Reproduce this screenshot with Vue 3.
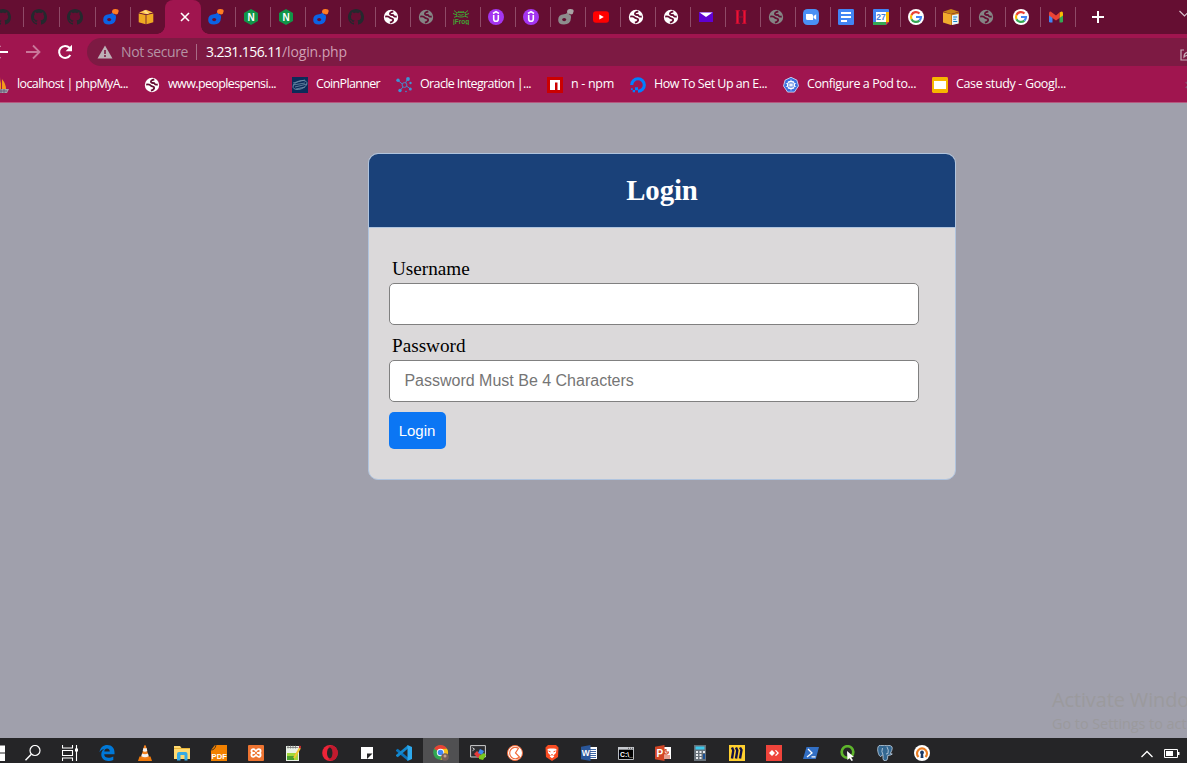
<script setup>
const leadingTabs = ['github', 'github', 'github', 'draw', 'aws']
const trailingTabs = [
  'draw', 'nginx', 'nginx', 'draw', 'github', 'globe', 'globe-dim', 'jfrog', 'udemy', 'udemy', 'draw-dim', 'youtube',
  'globe', 'globe', 'mail', 'heroku', 'globe-dim', 'zoom', 'docs', 'calendar', 'google', 'awsdoc', 'globe-dim', 'google', 'gmail',
]
const bookmarks = [
  { icon: 'pma', label: 'localhost | phpMyA...', width: 111 },
  { icon: 'globe', label: 'www.peoplespensi...', width: 108 },
  { icon: 'coin', label: 'CoinPlanner', width: 64 },
  { icon: 'nodes', label: 'Oracle Integration |...', width: 111 },
  { icon: 'npm', label: 'n - npm', width: 43 },
  { icon: 'ocean', label: 'How To Set Up an E...', width: 113 },
  { icon: 'kube', label: 'Configure a Pod to...', width: 109 },
  { icon: 'slides', label: 'Case study - Googl...', width: 110 },
]
const apps = [
  'windows', 'search', 'taskview', 'edge', 'vlc', 'folder', 'pdf', 'xampp', 'notepad', 'opera', 'sticky', 'vscode', 'chrome',
  'terminal', 'postman', 'brave', 'word', 'cmd', 'ppt', 'calc', 'miro', 'anydesk', 'pshell', 'qlik', 'pgsql', 'openvpn',
]
// Spreads the letters of a label so that it fills exactly the given width.
const vFit = {
  mounted(el, { value }) {
    const natural = el.getBoundingClientRect().width
    el.style.letterSpacing = (value - natural) / el.textContent.length + 'px'
  },
}
</script>

<template>
  <svg class="defs" width="0" height="0">
    <symbol id="github" viewBox="0 0 16 16"><path fill="#24292e" d="M8 0C3.58 0 0 3.58 0 8c0 3.54 2.29 6.53 5.47 7.59.4.07.55-.17.55-.38 0-.19-.01-.82-.01-1.49-2.01.37-2.53-.49-2.69-.94-.09-.23-.48-.94-.82-1.13-.28-.15-.68-.52-.01-.53.63-.01 1.08.58 1.23.82.72 1.21 1.87.87 2.33.66.07-.52.28-.87.51-1.07-1.78-.2-3.64-.89-3.64-3.95 0-.87.31-1.59.82-2.15-.08-.2-.36-1.02.08-2.12 0 0 .67-.21 2.2.82.64-.18 1.32-.27 2-.27s1.36.09 2 .27c1.53-1.04 2.2-.82 2.2-.82.44 1.1.16 1.92.08 2.12.51.56.82 1.27.82 2.15 0 3.07-1.87 3.75-3.65 3.95.29.25.54.73.54 1.48 0 1.07-.01 1.93-.01 2.2 0 .21.15.46.55.38A8.01 8.01 0 0016 8c0-4.42-3.58-8-8-8z" /></symbol>
    <symbol id="draw" viewBox="0 0 16 16">
      <path d="M9 3q0-2.800 3-2.900 4-.3 3.600 2.400-.3 2.800-2.600 3.100-.8 0-1.200-.8-2.800.6-2.800-1.800z" fill="#ff7c22" />
      <path d="M.2 11Q.2 5.600 6 5.300q2.500-.2 3.200-1.500 1.200 1.600 3 2.200 1 .4.8 2.500-.3 7-7 7Q.2 15.500.2 11z" fill="#0b62e4" />
      <ellipse cx="6.200" cy="10.600" rx="2" ry="1.600" fill="#650e32" />
    </symbol>
    <symbol id="draw-dim" viewBox="0 0 16 16">
      <path d="M9 3q0-2.800 3-2.900 4-.3 3.600 2.400-.3 2.800-2.600 3.100-.8 0-1.200-.8-2.800.6-2.800-1.800z" fill="#a9a3a5" />
      <path d="M.2 11Q.2 5.600 6 5.300q2.500-.2 3.200-1.500 1.200 1.600 3 2.200 1 .4.8 2.500-.3 7-7 7Q.2 15.500.2 11z" fill="#8d8d8d" />
      <ellipse cx="6.200" cy="10.600" rx="2" ry="1.600" fill="#650e32" />
    </symbol>
    <symbol id="aws" viewBox="0 0 16 16">
      <path d="M1 3.500 8 .7l7 2.800L8 5.300z" fill="#ffc24a" /><path d="M.7 4.500 7.600 6v9.300L.7 13.200zM8.400 6l6.900-1.500v8.700l-6.900 2.100z" fill="#efa922" />
      <path d="m5 2 2.500-.8 3.500 3.500-2 .4z" fill="#ffe08a" />
    </symbol>
    <symbol id="awsdoc" viewBox="0 0 16 16">
      <path d="M0 2.800 8 0l8 2.800-8 2.300z" fill="#c88418" /><path d="m0 3.200 8 2V16l-8-2.500z" fill="#f2ab2d" /><path d="m8 5.200 8-2v11L8 16z" fill="#c98017" />
      <path d="m9 6.200 6.500-1.200v9.600L9 15.900z" fill="#e8f6ff" /><path d="M10.200 8h4M10.200 10.200h3M10.200 12.500h4" stroke="#1583c5" stroke-width="1.100" />
    </symbol>
    <symbol id="nginx" viewBox="0 0 16 16"><path d="M8 0l7 4v8l-7 4-7-4V4z" fill="#119548" /><text x="8" y="11.600" font-size="10" font-weight="bold" text-anchor="middle" fill="#fff">N</text></symbol>
    <symbol id="globe" viewBox="0 0 16 16">
      <circle cx="8" cy="8" r="7.200" fill="#fff" />
      <path d="M2.200 7.600c2-.3 3.900-.1 4.500 1 .7 1.100 3.500.3 3.500 2.100 0 1.600-1.700 2.500-3.300 3M10.300 2.500c-2.300.3-3.800 1.400-3.300 2.700.5 1.400 3.200.2 3.700 1.500.3.900 2 1.100 3 .7" fill="none" stroke="#650e32" stroke-width="1.800" />
    </symbol>
    <symbol id="globe-dim" viewBox="0 0 16 16">
      <circle cx="8" cy="8" r="7.200" fill="#858585" />
      <path d="M2.200 7.600c2-.3 3.900-.1 4.500 1 .7 1.100 3.500.3 3.500 2.100 0 1.600-1.700 2.500-3.300 3M10.300 2.500c-2.300.3-3.800 1.400-3.300 2.700.5 1.400 3.200.2 3.700 1.500.3.900 2 1.100 3 .7" fill="none" stroke="#650e32" stroke-width="1.800" />
    </symbol>
    <symbol id="jfrog" viewBox="0 0 16 16">
      <g fill="none" stroke="#41a533" stroke-width="1"><path d="M1 1.500 4 4M15 1.500 12 4M0 4.500l4 1.500M16 4.500 12 6M1 8.300l3-1M15 8.300l-3-1M5 2.500c1 1.200 5 1.200 6 0" /><ellipse cx="8" cy="5.500" rx="4.500" ry="2.500" /><path d="M5.500 5.500q2.500 1.500 5 0" /></g>
      <text x="8" y="14.500" font-size="6.500" font-weight="bold" text-anchor="middle" fill="#41a533">jFrog</text>
    </symbol>
    <symbol id="udemy" viewBox="0 0 16 16"><circle cx="8" cy="8" r="8" fill="#a435f0" /><path d="m5 4.500 3-1.900 3 1.900M5.700 6v4q0 2.300 2.300 2.300t2.300-2.300V6" fill="none" stroke="#fff" stroke-width="1.600" /></symbol>
    <symbol id="youtube" viewBox="0 0 16 16"><rect y="2.200" width="16" height="11.600" rx="3" fill="red" /><path d="m6.300 5.400 4.500 2.600-4.500 2.600z" fill="#fff" /></symbol>
    <symbol id="mail" viewBox="0 0 16 16"><path d="M1 3h14v10H1z" fill="#6001d2" /><path d="M1.500 3.500h13L8 8z" fill="#fff" /></symbol>
    <symbol id="heroku" viewBox="0 0 16 16"><path d="M4.500 1.500v13M11.500 1.500v13" stroke="#f01135" stroke-width="2.300" /><path d="M2.500 1.700h4.500M9 1.700h4.500M2.500 14.300h4.500M9 14.300h4.500" stroke="#d00d31" stroke-width=".9" /><path d="M5 8h6" stroke="#b00b2d" stroke-width=".8" /></symbol>
    <symbol id="zoom" viewBox="0 0 16 16"><rect width="16" height="16" rx="4.500" fill="#4a90f5" /><path d="M3 5h5.500q1.500 0 1.500 1.500V11H4.500Q3 11 3 9.500zM10.500 7l2.700-1.700v5.500L10.500 9z" fill="#fff" /></symbol>
    <symbol id="docs" viewBox="0 0 16 16"><rect width="16" height="16" rx="1.300" fill="#4285f4" /><path d="M3 4h10M3 8h10M3 12h6" stroke="#fff" stroke-width="2" /></symbol>
    <symbol id="calendar" viewBox="0 0 16 16">
      <rect width="16" height="16" rx="1" fill="#4285f4" /><path d="M13 3h3v10h-3z" fill="#fbbc04" /><path d="M0 13h13v3H1q-1 0-1-1z" fill="#34a853" /><path d="M13 13h3l-3 3z" fill="#ea4335" /><path d="M16 13v3h-3z" fill="#650e32" /><path d="M3 3h10v10H3z" fill="#fff" />
      <text x="7.900" y="11.200" font-size="8.500" font-weight="bold" text-anchor="middle" fill="#3f7fdf">27</text>
    </symbol>
    <symbol id="google" viewBox="0 0 16 16">
      <circle cx="8" cy="8" r="8" fill="#fff" /><g fill="none" stroke-width="2.200"><path d="M11.500 4.500A5 5 0 0 0 3.500 5.900" stroke="#ea4335" /><path d="M3.500 5.900a5 5 0 0 0 0 4.300" stroke="#fbbc05" /><path d="M3.500 10.200a5 5 0 0 0 7.900 1.400" stroke="#34a853" /><path d="M8 8h5a5 5 0 0 1-1.600 3.600" stroke="#4285f4" /></g>
    </symbol>
    <symbol id="gmail" viewBox="0 0 16 16"><path d="M1 4.500 4.500 7v6.500h-2.300Q1 13.500 1 12.300z" fill="#4285f4" /><path d="M15 4.500 11.500 7v6.500h2.300q1.200 0 1.200-1.200z" fill="#34a853" /><path d="M11.500 3.500 13 2.700q2-.6 2 1.800v2L11.500 9z" fill="#fbbc04" /><path d="M1 4.500q0-2.400 2-1.800L8 6.400l3.500-2.800V9L8 11.500 4.500 9 1 6.500z" fill="#ea4335" /></symbol>

    <symbol id="pma" viewBox="0 0 16 16"><path d="M8 0v12H4Q8 7 8 0zM9 2q4 5 4 10H9zM3 5v7H0z" fill="#f49a1b" /><path d="M0 12h16l-2 4H3z" fill="#a4a1aa" /><path d="M2 14h12M5 12v4M8 12v4M11 12v4" stroke="#5c5873" stroke-width=".8" /></symbol>
    <symbol id="coin" viewBox="0 0 16 16"><path d="M0 0h16v16H0z" fill="#0b2b59" /><g fill="none" stroke="#708fab" stroke-width=".8"><ellipse cx="8" cy="8" rx="7.300" ry="4" transform="rotate(-20 8 8)" /><path d="m1 6 12-3M1 8l12-2M3 10l12-3M4 12l9-2" /></g></symbol>
    <symbol id="nodes" viewBox="0 0 16 16"><g stroke="#3e94d5" stroke-width=".9" fill="none"><circle cx="8.500" cy="8" r="2.400" /><path d="M6.300 7 2 3.500M9.500 6 11.500 2M7 10l-3 3.500M10.500 9l4 3" /></g><g fill="#3e94d5"><circle cx="2" cy="3.300" r="1.700" /><circle cx="12" cy="2" r="1.900" /><circle cx="4" cy="13.500" r="1.700" /><circle cx="14.300" cy="12" r="1.500" /><circle cx="14.500" cy="6" r="1.200" /><circle cx="10" cy="14.500" r=".8" /></g></symbol>
    <symbol id="npm" viewBox="0 0 16 16"><path d="M0 0h16v16H0z" fill="#cb0000" /><path d="M3 3h10v10h-2.500V5.500H8V13H3z" fill="#fff" /></symbol>
    <symbol id="ocean" viewBox="0 0 16 16"><path d="M8 14.300A6.300 6.300 0 1 0 1.700 8" fill="none" stroke="#0080ff" stroke-width="3.100" /><path d="M5 10.300h3v3H5zM2.700 13h2.300v2.300H2.700zM1 11.300h1.700V13H1z" fill="#0080ff" /></symbol>
    <symbol id="kube" viewBox="0 0 16 16"><path d="m8 .3 5.900 2.800L15.500 9l-4.100 6.100H4.600L.5 9l1.600-5.900z" fill="#3970df" stroke="#dce7fb" stroke-width=".8" /><circle cx="8" cy="8" r="3.600" fill="none" stroke="#fff" stroke-width="1.100" /><path d="M8 2.500v11M2.800 6.300l10.400 3.400M13.200 6.300 2.800 9.700M5 12l6-8M5 4l6 8" stroke="#fff" stroke-width=".7" /></symbol>
    <symbol id="slides" viewBox="0 0 16 16"><rect width="16" height="16" rx="1.400" fill="#f7b500" /><path d="M2 4h12v8H2z" fill="#fff" /></symbol>

    <symbol id="windows" viewBox="0 0 16 16"><path d="M0 1.500 7.500.8v6.700H0zM8.500.5H16v7H8.500zM0 8.500h7.500v6.700L0 14.500zM8.500 8.500H16V16H8.500z" fill="#fff" /></symbol>
    <symbol id="search" viewBox="0 0 16 16"><circle cx="10" cy="5.500" r="5" fill="none" stroke="#fff" stroke-width="1.200" /><path d="M6.300 9.200.5 15.300" stroke="#fff" stroke-width="1.400" /></symbol>
    <symbol id="taskview" viewBox="0 0 16 16"><path d="M.5 0v3h10V0M.5 5.500h10v5H.5zM.5 16v-3h10v3M14.500 0v16" fill="none" stroke="#fff" stroke-width="1.100" /><path d="M13 3.500h3v3h-3z" fill="#fff" /></symbol>
    <symbol id="edge" viewBox="0 0 16 16"><path d="M.5 7.200C1.300 2.500 4.300 0 8.300 0c4.700 0 7.200 3.400 7.200 7.500V9.300H5.200c.2 4.300 5.500 4.300 9.100 2.200v3.400c-5 2.500-12 .8-12-5.400 0-2.700 1.300-4.600 3.200-5.700C3.400 4.200 1.500 5.400.5 7.200zM5.300 6.500h5.500C10.800 2.700 5.500 2.500 5.300 6.500z" fill="#0078d7" /></symbol>
    <symbol id="vlc" viewBox="0 0 16 16"><path d="M2.500 11.500h11l1.500 4.500H1z" fill="#f07a0b" /><path d="M7.200.5q.8-.6 1.600 0L12 13q-4 2-8 0z" fill="#f5821f" /><path d="m6.500 3-.8 3q2.300 1.500 4.600 0l-.7-3q-1.600.8-3.100 0zM5 8.500l-.7 2.700q3.700 2 7.400 0L11 8.500q-3 1.500-6 0z" fill="#f4f4f4" /></symbol>
    <symbol id="folder" viewBox="0 0 16 16"><path d="M0 1h6l1.500 2H16v11H0z" fill="#ffd970" /><path d="M0 3.500h16" stroke="#e9b537" /><path d="M3 15.500V9q0-2 2-2h6.500q2 0 2 2v6.500h-3V10h-4v5.500z" fill="#36abe5" /></symbol>
    <symbol id="pdf" viewBox="0 0 16 16"><path d="M4 0h12v16H0V5z" fill="#f28100" /><path d="M0 5q4 0 5-5" stroke="#252527" stroke-width=".8" fill="none" /><text x="8.200" y="14" font-size="7.600" font-weight="bold" text-anchor="middle" fill="#fff">PDF</text></symbol>
    <symbol id="xampp" viewBox="0 0 16 16"><rect width="16" height="16" rx="1" fill="#ee7431" /><path d="M6.900 8H5.300A1.900 1.900 0 1 1 5.300 4.200Q6.500 4.200 8 6q1.500-1.800 2.700-1.800a1.900 1.900 0 1 1 0 3.800H9.100 10.700a1.900 1.900 0 1 1 0 3.800Q9.500 11.800 8 10q-1.500 1.800-2.700 1.800A1.900 1.900 0 1 1 5.300 8z" fill="none" stroke="#fff" stroke-width="1.800" /></symbol>
    <symbol id="notepad" viewBox="0 0 16 16"><path d="M1 1h13v15H1z" fill="#e9f1e7" /><path d="M2 2.500h11M3 .5v3M5.500.5v3M8 .5v3M10.500.5v3" stroke="#777" stroke-width=".8" /><path d="M2 8h11v7H2z" fill="#a2d83b" /><path d="M2 11h7v4H2z" fill="#4a9e2e" /><path d="m9 13 6-10" stroke="#f4c433" stroke-width="2" /><path d="m14.500 3 1-2" stroke="#d22b32" stroke-width="2" /></symbol>
    <symbol id="opera" viewBox="0 0 16 16"><ellipse cx="8" cy="8" rx="7.800" ry="8" fill="#ed2438" /><path d="M12 1q4 3 3.800 7T12 15q-4 1-6-1 5-2 5-6T6 2q3-2 6-1z" fill="#c21a2e" /><ellipse cx="7.800" cy="8" rx="2.800" ry="5.400" fill="#252527" /></symbol>
    <symbol id="sticky" viewBox="0 0 16 16"><path d="M2 2h12v12H2z" fill="#fff" /><path d="M8 8.500h5.500L8 14z" fill="#252527" /></symbol>
    <symbol id="vscode" viewBox="0 0 16 16"><path d="m0 5 1.800-1.200L12 12.500V16L0 6z" fill="#0a75bd" /><path d="m0 11 1.800 1.300L12 3.500V0L0 10z" fill="#148ad0" /><path d="m11.500 0 4.500 2v12l-4.500 2z" fill="#2da9ed" /></symbol>
    <symbol id="chrome" viewBox="0 0 16 16"><circle cx="7.500" cy="7.500" r="7.300" fill="#31a751" /><path d="M1.200 3.800a7.300 7.300 0 0 1 12.700 0L7.500 8z" fill="#e94235" /><path d="M14 3.800A7.300 7.300 0 0 1 7.500 14.800L10 7.500 7.500 4z" fill="#fbc116" /><circle cx="7.500" cy="7.500" r="3.700" fill="#fff" /><circle cx="7.500" cy="7.500" r="2.800" fill="#4285f4" /><circle cx="12" cy="12" r="3.800" fill="#76605b" /><circle cx="12" cy="11" r="1.500" fill="#c6a08c" /></symbol>
    <symbol id="terminal" viewBox="0 0 16 16"><path d="M.6.600h14.800V12H.6z" fill="#2e2e31" stroke="#cfcfcf" /><path d="m2.500 2.700 2 1.500-2 1.500" fill="none" stroke="#fff" stroke-width=".8" /><path d="m4 9 3-3 4 4-3 3z" fill="#e73b39" /><path d="m8 8 2-4 4 2-2 4z" fill="#3e8def" /><path d="m9 11 5-3 2 2-3 5-4-1z" fill="#79c91e" /></symbol>
    <symbol id="postman" viewBox="0 0 16 16"><circle cx="8" cy="8" r="7.500" fill="#fff" stroke="#f26b3a" /><path d="M11.500 3.300A5.700 5.700 0 1 0 12.500 12L8.500 8z" fill="none" stroke="#f26b3a" stroke-width="1.200" /></symbol>
    <symbol id="brave" viewBox="0 0 16 16"><path d="m4 0-2.500 2.500L2 12l6 4 6-4 .5-9.500L12 0z" fill="#f94c22" /><path d="M3.500 4 6 3.500h4L12.500 4l-.6 4-2 2 .3 1.500L8 13.300 5.800 11.500l.3-1.500-2-2z" fill="#fff" /><path d="m4.500 6 2 .8M11.500 6l-2 .8M6.500 10.500 8 9.500l1.500 1" stroke="#f94c22" fill="none" /></symbol>
    <symbol id="word" viewBox="0 0 16 16"><path d="M8 2h8v12H8z" fill="#fff" /><path d="M9 4.500h6M9 6.500h6M9 8.500h6M9 10.500h6M9 12.500h6" stroke="#2a5699" stroke-width=".9" /><path d="m0 1.700 9.500-1.700v16L0 14.300z" fill="#2a5699" /><text x="4.700" y="11.300" font-size="8.500" font-weight="bold" text-anchor="middle" fill="#fff">W</text></symbol>
    <symbol id="cmd" viewBox="0 0 16 16"><path d="M.5 2.500h15v12H.5z" fill="#000" stroke="#b8bcc0" /><path d="M0 2h16v2.700H0z" fill="#c6c9ce" /><path d="M10 3.300h1M12 3.300h1M14 3.300h1" stroke="#555" /><text x="2" y="12.400" font-size="6.800" font-weight="bold" fill="#fff">C:\_</text></symbol>
    <symbol id="ppt" viewBox="0 0 16 16"><path d="M8 2h8v12H8z" fill="#fff" /><path d="M11 7.500V4.500a2.300 2.300 0 1 0 2.500 2.500H11M10 11h5M10 13h5" stroke="#d24625" fill="none" stroke-width="1.100" /><path d="m0 1.700 9.500-1.700v16L0 14.300z" fill="#d24625" /><text x="4.800" y="11.700" font-size="10" font-weight="bold" text-anchor="middle" fill="#fff">P</text></symbol>
    <symbol id="calc" viewBox="0 0 16 16"><path d="M2 0h12v16H2z" fill="#687179" /><path d="M3.500 1.500h9v3h-9z" fill="#3cc9ec" /><path d="M4 7h2M7.500 7h2M11 7h2M4 10h2M7.500 10h2M4 13h2M7.500 13h2" stroke="#e9ecef" stroke-width="1.800" /><path d="M11 9h2v5h-2z" fill="#1b5094" /></symbol>
    <symbol id="miro" viewBox="0 0 16 16"><path d="M0 0h16v16H0z" fill="#ffd02f" /><path d="m3 2.500 1.300 3L3 13.500M7 2.500l1.300 3L7 13.500M11 2.500l1.500 2.500L11 13.500" fill="none" stroke="#101044" stroke-width="2.400" /></symbol>
    <symbol id="anydesk" viewBox="0 0 16 16"><path d="M0 0h16v16H0z" fill="#ef443b" /><path d="m6 5 3 3-3 3-3-3zM9 5.500 10 5l3 3-3 3-1-.8L11.200 8z" fill="#fff" /></symbol>
    <symbol id="pshell" viewBox="0 0 16 16"><path d="M3.500 2H16l-3.200 12H0z" fill="#326fc4" /><path d="m5 4 4 4-5 4M8.500 11.800h4" fill="none" stroke="#fff" stroke-width="1.300" /></symbol>
    <symbol id="qlik" viewBox="0 0 16 16"><circle cx="7.500" cy="7" r="5.800" fill="none" stroke="#5eb52c" stroke-width="2.700" /><path d="m7 6 7 6-3 .3 2 3-1.500.7-2-3L7.500 15z" fill="#fff" /></symbol>
    <symbol id="pgsql" viewBox="0 0 16 16"><path d="M5 .5Q1-.5.700 3.500C.5 7 2 11 3.500 11.500L6 9.700v4q.2 2 2.200 2t2.300-2l.3-3.200q4-.5 4.500-1.500l-2-.5Q17 2 13.700.8 12 0 10 .8 8-.2 5 .500z" fill="#336791" stroke="#c7d6e4" stroke-width=".8" /><path d="M5.500 3Q4 7 6 9.500M10 2q2 3 1 6.500L9 9" fill="none" stroke="#c7d6e4" stroke-width=".8" /></symbol>
    <symbol id="openvpn" viewBox="0 0 16 16"><circle cx="8" cy="8" r="8" fill="#fff" /><path d="M4.500 12a5 5 0 1 1 7 0" fill="none" stroke="#ea7e24" stroke-width="2.200" /><circle cx="8" cy="7.500" r="1.900" fill="#1b3967" /><path d="M7 8h2l.5 5h-3z" fill="#1b3967" /></symbol>
  </svg>

  <div class="screen">
    <div class="tabs">
      <div v-for="(t, i) in leadingTabs" :key="'l' + i" class="tab" :class="{ wide: i < 3, last: i === 4 }"><svg class="ic"><use :href="'#' + t" /></svg></div>
      <div class="tab-active"><svg width="10" height="10" viewBox="0 0 10 10"><path d="m1 1 8 8M9 1 1 9" stroke="#fff" stroke-width="1.600" /></svg></div>
      <div v-for="(t, i) in trailingTabs" :key="'t' + i" class="tab"><svg class="ic"><use :href="'#' + t" /></svg></div>
      <svg class="plus" width="12" height="12" viewBox="0 0 12 12"><path d="M6 0v12M0 6h12" stroke="#fff" stroke-width="2" /></svg>
      <svg class="chev" width="12" height="8" viewBox="0 0 12 8"><path d="m.5 1 5 5 5-5" fill="none" stroke="#d9c0cb" stroke-width="1.200" /></svg>
    </div>
    <div class="toolbar">
      <svg class="back" width="16" height="16" viewBox="0 0 16 16"><path d="M16 8H2M8 1.500 1.500 8 8 14.500" fill="none" stroke="#fff" stroke-width="2" /></svg>
      <svg class="fwd" width="16" height="16" viewBox="0 0 16 16"><path d="M1 8h13M8 1.500 14.500 8 8 14.500" fill="none" stroke="#c9779a" stroke-width="1.800" /></svg>
      <svg class="reload" width="16" height="16" viewBox="0 0 16 16"><path d="M13.300 11A6 6 0 1 1 12.500 3.800L14 5.300" fill="none" stroke="#fff" stroke-width="2" /><path d="M15 .8v6.400H8.600z" fill="#fff" /></svg>
      <div class="omnibox">
        <svg class="warn" width="16" height="14" viewBox="0 0 16 14"><path d="M8 .5 15.500 13.500H.5z" fill="#bdb0b6" /><path d="M8 5v4M8 10v2" stroke="#7d1a43" stroke-width="1.600" /></svg>
        <span v-fit="67" class="insecure">Not secure</span><i class="rule" /><span v-fit="76" class="host">3.231.156.11</span><span v-fit="65" class="path">/login.php</span>
        <svg class="share" width="16" height="14" viewBox="0 0 16 14"><path d="M4 3H1v10h12V9M4 10q0-5 6-5V2l5 4.500-5 4V8Q6 8 4 10z" fill="none" stroke="#c8aab7" stroke-width="1.200" /></svg>
      </div>
    </div>
    <div class="bookmarks">
      <div v-for="b in bookmarks" :key="b.label" class="bm"><svg class="ic"><use :href="'#' + b.icon" /></svg><span v-fit="b.width">{{ b.label }}</span></div>
      <svg class="more" width="8" height="8" viewBox="0 0 8 8"><path d="m.7 1 3 3-3 3M4.200 1l3 3-3 3" fill="none" stroke="#8a5070" stroke-width="1.400" /></svg>
    </div>
    <main class="page">
      <section class="card">
        <div class="head"><h2>Login</h2></div>
        <form @submit.prevent>
          <div class="group"><label for="user">Username</label><input id="user" type="text"></div>
          <div class="group"><label for="pass">Password</label><input id="pass" type="password" placeholder="Password Must Be 4 Characters"></div>
          <button type="submit">Login</button>
        </form>
      </section>
      <div class="activate"><span v-fit="162" class="big">Activate Windows</span><span v-fit="235" class="small">Go to Settings to activate Windows.</span></div>
    </main>
    <div class="taskbar">
      <div v-for="(a, i) in apps" :key="a" class="app" :class="{ on: a === 'chrome', near: i > 0 && i < 4 }"><svg class="ic"><use :href="'#' + a" /></svg></div>
      <div class="tray">
        <svg width="12" height="8" viewBox="0 0 12 8"><path d="m.5 7 5.500-5.500L11.500 7" fill="none" stroke="#fff" stroke-width="1.300" /></svg>
        <svg width="16" height="9" viewBox="0 0 16 9"><path d="M.5.500h13v8H.5z" fill="none" stroke="#fff" /><path d="M2 2h7v5H2zM14 3h1.500v3H14z" fill="#fff" /></svg>
      </div>
    </div>
  </div>
</template>

<style>
body { margin: 0; overflow: hidden; }
</style>

<style scoped>
.defs { display: none; }
symbol text { font-family: "Liberation Sans", Arial, sans-serif; }
.screen { width: 1187px; height: 763px; overflow: hidden; display: flex; flex-direction: column; background: #a0a0ac; font-family: "Open Sans", "Noto Sans", sans-serif; }
.ic { width: 16px; height: 16px; flex: none; display: block; }
.tabs { height: 34px; flex: none; display: flex; background: #650e32; overflow: hidden; }
.tab { box-sizing: border-box; width: 35px; flex: none; padding: 9px 0 0 7px; background: linear-gradient(#8f4a67, #8f4a67) right 7px / 1px 20px no-repeat; }
.tab.wide { width: 36px; }
.tab.last { width: 34px; background: none; }
.tab:first-child { margin-left: -12px; }
.tab-active { width: 36px; flex: none; background: #a0154f; border-radius: 8px 8px 0 0; position: relative; }
.tab-active::before, .tab-active::after { content: ""; position: absolute; bottom: 0; width: 8px; height: 8px; }
.tab-active::before { left: -8px; background: radial-gradient(circle at 0 0, transparent 7.500px, #a0154f 8px); }
.tab-active::after { right: -8px; background: radial-gradient(circle at 100% 0, transparent 7.500px, #a0154f 8px); }
.tab-active svg { display: block; margin: 12px 0 0 15px; }
.plus { flex: none; margin: 11px 0 0 16px; }
.chev { flex: none; margin: 10px 0 0 75px; }
.toolbar { height: 34px; flex: none; display: flex; align-items: center; background: #a0154f; }
.toolbar > svg { flex: none; }
.back { margin: 2px 0 0 -8px; }
.fwd { margin: 2px 0 0 17px; }
.reload { margin: 2px 0 0 16px; }
.omnibox { box-sizing: border-box; width: 1120px; height: 28px; flex: none; margin: 2px 0 0 14px; border-radius: 14px; background: #7d1a43; display: flex; align-items: center; padding-left: 10px; font-size: 14px; white-space: pre; line-height: 28px; }
.omnibox > * { flex: none; }
.insecure { margin-left: 8px; color: #b593a3; }
.rule { width: 1px; height: 16px; margin: 0 9px 0 8px; background: #a86c86; }
.host { color: #fff; }
.path { color: #cf9fb3; }
.share { margin: 4px 0 0 833px; }
.bookmarks { height: 34px; flex: none; display: flex; align-items: center; background: #a0154f; border-bottom: 1px solid #b5597f; font-size: 12.500px; color: #fff; }
.bm { display: flex; align-items: center; gap: 8px; padding-right: 16px; flex: none; line-height: 18px; white-space: pre; }
.bm span { margin-top: -2px; }
.bm:first-child { margin-left: -7px; }
.bm:first-child + .bm { margin-left: 0; }
.more { flex: none; margin-left: 103px; }
.page { flex: 1; position: relative; font-family: "Liberation Serif", "Times New Roman", serif; font-size: 19.200px; color: #000; }
.card { box-sizing: border-box; width: 588px; margin: 50px 0 0 368px; border: 1px solid #b0c4de; border-radius: 10px; background: #dbd9da; overflow: hidden; }
.head { height: 73px; background: #1a4179; border-bottom: 1px solid #b0c4de; color: #fff; text-align: center; }
h2 { margin: 0; font-size: 28.800px; line-height: 72px; letter-spacing: -.1px; }
form { height: 251px; box-sizing: border-box; padding: 30px 36px 0 20px; }
.group { height: 67px; margin-bottom: 10px; }
label { display: block; height: 25px; line-height: 21px; margin-left: 3px; }
input { display: block; box-sizing: border-box; width: 530px; height: 42px; padding: 5px 14.400px; border: 1px solid gray; border-radius: 5px; background: #fff; font: 16px "Liberation Sans", Arial, sans-serif; }
input::placeholder { color: #757575; opacity: 1; }
button { display: block; box-sizing: border-box; width: 57px; height: 37px; padding: 0 1px 0 0; border: 0; border-radius: 5px; background: #0b76f4; color: #fff; font: 15px "Liberation Sans", Arial, sans-serif; }
.activate { position: absolute; left: 1052px; top: 583px; display: flex; flex-direction: column; align-items: flex-start; white-space: pre; color: #9b9a9d; font-family: "Open Sans", "Noto Sans", sans-serif; }
.big { font-size: 20px; line-height: 28px; }
.small { font-size: 14.500px; line-height: 19px; }
.taskbar { height: 25px; flex: none; display: flex; gap: 1px; background: #252527; overflow: hidden; }
.app { width: 36px; box-sizing: border-box; flex: none; padding: 7px 0 0 10px; }
.near { padding-left: 9px; }
.app:first-child { margin-left: -21px; }
.on { background: #505052; }
.tray { flex: none; display: flex; align-items: center; gap: 11px; margin: 6px 0 0 200px; height: 19px; }
</style>
